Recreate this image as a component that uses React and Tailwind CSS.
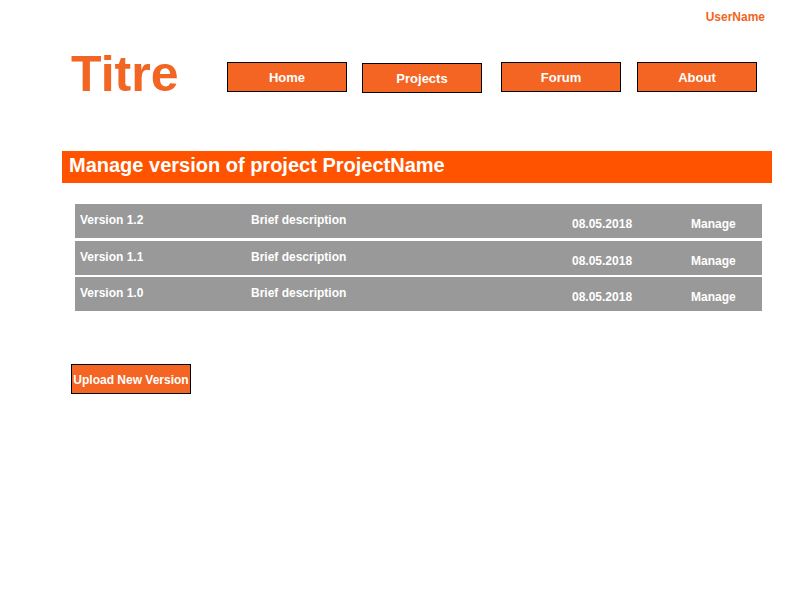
const navItems = [
  { label: 'Home', cls: 'mt-[12px]' },
  { label: 'Projects', cls: 'mt-[13px] ml-[15px]' },
  { label: 'Forum', cls: 'mt-[12px] ml-[19px]' },
  { label: 'About', cls: 'mt-[12px] ml-[16px]' },
];

const versions = [
  { name: 'Version 1.2', desc: 'Brief description', date: '08.05.2018' },
  { name: 'Version 1.1', desc: 'Brief description', date: '08.05.2018' },
  { name: 'Version 1.0', desc: 'Brief description', date: '08.05.2018' },
];

export default function App() {
  return (
    <div className="w-[800px] h-[600px] bg-white font-['Liberation_Sans',Arial,sans-serif] font-bold">
      {/* user */}
      <div className="pt-[10px] pr-[35px] text-right text-[12px] leading-[14px] text-[#f26522]">
        UserName
      </div>

      {/* title + nav */}
      <div className="flex items-start h-[48px] mt-[26px] pl-[71px]">
        <div className="w-[156px] text-[50px] leading-[48px] text-[#f26522]">Titre</div>
        {navItems.map((item) => (
          <button
            key={item.label}
            className={`w-[120px] h-[30px] border border-black bg-[#f46524] text-white text-[13px] leading-none ${item.cls}`}
          >
            {item.label}
          </button>
        ))}
      </div>

      {/* page header */}
      <div className="mt-[53px] ml-[62px] w-[710px] h-[32px] bg-[#ff5300] flex items-center pl-[7px] pb-[4px]">
        <h1 className="text-[20px] leading-none text-white">Manage version of project ProjectName</h1>
      </div>

      {/* versions */}
      <div className="mt-[21px] ml-[75px] w-[687px] flex flex-col">
        {versions.map((v, i) => (
          <div
            key={v.name}
            className={`h-[34px] bg-[#999999] flex text-white text-[12px] leading-[14px] pl-[5px] ${
              i === 1 ? 'mt-[3px]' : i === 2 ? 'mt-[2px]' : ''
            }`}
          >
            <span className="w-[171px] pt-[9px]">{v.name}</span>
            <span className="w-[321px] pt-[9px]">{v.desc}</span>
            <span className="w-[119px] pt-[13px]">{v.date}</span>
            <span className="pt-[13px]">Manage</span>
          </div>
        ))}
      </div>

      {/* upload */}
      <button className="mt-[53px] ml-[71px] w-[120px] h-[30px] border border-black bg-[#f46524] text-white text-[12px] leading-none pt-[2px]">
        Upload New Version
      </button>
    </div>
  );
}
